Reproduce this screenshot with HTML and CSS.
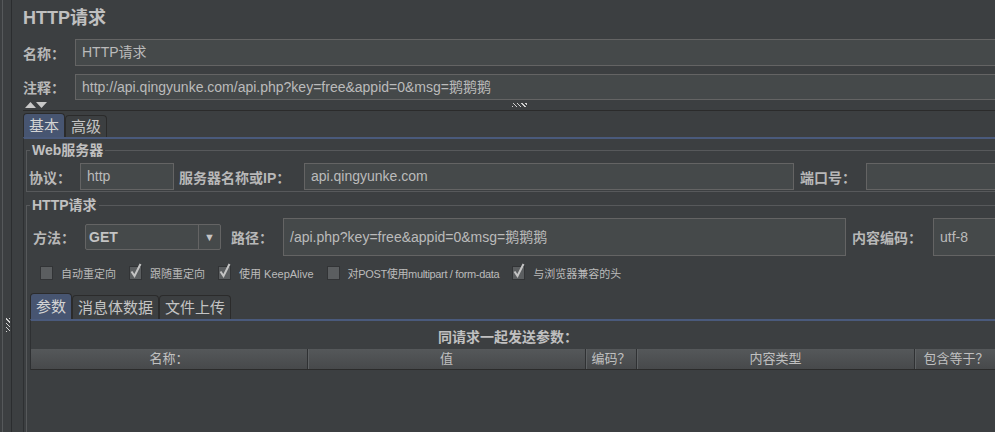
FILE: index.html
```html
<!DOCTYPE html>
<html lang="zh-CN">
  <head>
    <meta charset="UTF-8" />
    <meta name="viewport" content="width=device-width, initial-scale=1.0" />
    <title>HTTP请求</title>
    <link rel="stylesheet" href="styles.css">
  </head>
  <body>
    <div class="app">
      <!-- left splitter -->
      <div class="side"><span class="grip-v"></span></div>

      <main class="main">
        <h1 class="title">HTTP请求</h1>

        <div class="form-row">
          <span class="lbl">名称：</span>
          <div class="field grow">HTTP请求</div>
        </div>
        <div class="form-row notes">
          <span class="lbl">注释：</span>
          <div class="field grow">http://api.qingyunke.com/api.php?key=free&amp;appid=0&amp;msg=鹅鹅鹅</div>
        </div>

        <div class="split-bar">
          <svg class="arrows" width="23" height="6" viewBox="0 0 23 6">
            <polygon points="0,6 5.5,0 11,6" fill="#c8c8c8" />
            <polygon points="11,0 22,0 16.5,6" fill="#c8c8c8" />
          </svg>
          <span class="grip-h"></span>
        </div>

        <div class="tabs">
          <div class="tab active">基本</div>
          <div class="tab">高级</div>
        </div>

        <div class="tab-pane">
          <fieldset class="group">
            <legend>Web服务器</legend>
            <div class="row web-row">
              <span class="lbl proto">协议：</span>
              <div class="field f-proto">http</div>
              <span class="lbl server">服务器名称或IP：</span>
              <div class="field f-server">api.qingyunke.com</div>
              <span class="lbl port">端口号：</span>
              <div class="field grow"></div>
            </div>
          </fieldset>

          <fieldset class="group http">
            <legend>HTTP请求</legend>
            <div class="row req-row">
              <span class="lbl method">方法：</span>
              <div class="combo">
                <span class="combo-value">GET</span>
                <span class="combo-btn">▼</span>
              </div>
              <span class="lbl path">路径：</span>
              <div class="field tall f-path">/api.php?key=free&amp;appid=0&amp;msg=鹅鹅鹅</div>
              <span class="lbl enc">内容编码：</span>
              <div class="field tall grow">utf-8</div>
            </div>

            <div class="checks">
              <label class="check"><span class="box"></span>自动重定向</label>
              <label class="check"><span class="box"><svg width="13" height="15" viewBox="0 0 13 15"><path d="M2.5 8.5 L5.5 13 L11.5 1" fill="none" stroke="#c4c4c4" stroke-width="2" /></svg></span>跟随重定向</label>
              <label class="check"><span class="box"><svg width="13" height="15" viewBox="0 0 13 15"><path d="M2.5 8.5 L5.5 13 L11.5 1" fill="none" stroke="#c4c4c4" stroke-width="2" /></svg></span>使用 KeepAlive</label>
              <label class="check narrow"><span class="box"></span>对POST使用multipart / form-data</label>
              <label class="check"><span class="box"><svg width="13" height="15" viewBox="0 0 13 15"><path d="M2.5 8.5 L5.5 13 L11.5 1" fill="none" stroke="#c4c4c4" stroke-width="2" /></svg></span>与浏览器兼容的头</label>
            </div>

            <div class="tabs inner">
              <div class="tab active">参数</div>
              <div class="tab">消息体数据</div>
              <div class="tab">文件上传</div>
            </div>

            <div class="inner-pane">
              <div class="caption">同请求一起发送参数：</div>
              <div class="thead">
                <div class="th c-name">名称：</div>
                <div class="th c-value">值</div>
                <div class="th c-enc">编码？</div>
                <div class="th c-type">内容类型</div>
                <div class="th c-eq">包含等于？</div>
              </div>
            </div>
          </fieldset>
        </div>
      </main>
    </div>
  </body>
</html>
```

FILE: styles.css
```css
body {
  margin: 0;
  padding: 0;
  width: 995px;
  height: 432px;
  overflow: hidden;
  background: #3c3f41;
  color: #bbbbbb;
  font-family: "Liberation Sans", "Noto Sans CJK SC", sans-serif;
}

.app {
  display: flex;
  height: 432px;
}

/* ===== left splitter ===== */
.side {
  flex: none;
  width: 12px;
  border-right: 1px solid #2b2d2f;
  background: linear-gradient(to right, #3c3f41 2px, #56595b 2px, #56595b 3px, #3c3f41 3px);
  padding: 318px 0 0 6px;
  box-sizing: border-box;
}

.grip-v {
  display: block;
  width: 4px;
  height: 14px;
  background: repeating-linear-gradient(45deg, #d0d0d0 0 1px, transparent 1px 3px);
}

.main {
  flex: none;
  width: 1000px;
  height: 432px;
  overflow: hidden;
  padding-left: 11px;
}

.title {
  margin: 0 0 11px;
  padding-top: 8px;
  font-size: 18px;
  line-height: 20px;
  font-weight: bold;
  color: #c0c0c0;
}

/* ===== fields ===== */
.form-row {
  display: flex;
  align-items: center;
  height: 27px;
}

.form-row.notes {
  margin-top: 8px;
  height: 26px;
}

.lbl {
  flex: none;
  font-size: 14px;
  font-weight: bold;
  white-space: nowrap;
  color: #b8b8b8;
}

.form-row .lbl {
  width: 52px;
}

.field {
  flex: none;
  box-sizing: border-box;
  height: 100%;
  border: 1px solid #646464;
  background: #45494a;
  padding: 0 6px;
  font-size: 14px;
  line-height: 24px;
  white-space: nowrap;
  overflow: hidden;
  color: #bbbbbb;
}

.grow {
  flex: 1;
}

.split-bar {
  display: flex;
  align-items: center;
  height: 10px;
  border-bottom: 1px solid #2b2b2b;
}

.arrows {
  margin-left: 2px;
}

.grip-h {
  margin-left: 464px;
  width: 15px;
  height: 4px;
  background: repeating-linear-gradient(45deg, #d0d0d0 0 1px, transparent 1px 3px);
}

/* ===== tabs ===== */
.tabs {
  display: flex;
  align-items: flex-end;
  height: 24px;
  margin-top: 2px;
}

.tab {
  box-sizing: border-box;
  height: 22px;
  padding: 0 5px;
  border: 1px solid #2b2b2b;
  border-bottom: none;
  border-radius: 4px 4px 0 0;
  font-size: 15px;
  line-height: 21px;
  color: #c4c4c4;
  white-space: nowrap;
}

.tab.active {
  height: 24px;
  line-height: 23px;
  background: #475571;
  color: #d4d4d4;
}

.tab-pane {
  border-top: 2px solid #4a5a7c;
  border-left: 1px solid #2e3032;
  padding-left: 2px;
}

/* ===== groups ===== */
.group {
  margin: 3px 0 0;
  padding: 5px 0 1px 2px;
  border: 1px solid #57595b;
  min-inline-size: 0;
}

.group legend {
  margin-left: 1px;
  padding: 0 2px;
  font-size: 14px;
  line-height: 16px;
  font-weight: bold;
  color: #c0c0c0;
}

.group.http {
  margin-top: 5px;
  padding-bottom: 80px;
}

.row {
  display: flex;
  align-items: center;
}

.web-row {
  height: 27px;
}

.proto { width: 51px; }
.f-proto { width: 94px; }
.server { width: 125px; margin-left: 5px; }
.f-server { width: 490px; }
.port { width: 66px; margin-left: 6px; }

.req-row {
  height: 38px;
  padding-left: 4px;
}

.method { width: 52px; }
.path { width: 52px; margin-left: 10px; }
.f-path { width: 563px; }
.enc { width: 81px; margin-left: 6px; }

.field.tall {
  line-height: 36px;
}

.combo {
  flex: none;
  display: flex;
  box-sizing: border-box;
  width: 136px;
  height: 26px;
  border: 1px solid #646464;
  border-radius: 2px;
  background: #45494a;
}

.combo-value {
  flex: 1;
  padding-left: 3px;
  font-size: 14px;
  font-weight: bold;
  line-height: 24px;
  color: #c4c4c4;
}

.combo-btn {
  width: 21px;
  border-left: 1px solid #646464;
  font-size: 11px;
  line-height: 24px;
  text-align: center;
  color: #c4c4c4;
}

/* ===== checkboxes ===== */
.checks {
  display: flex;
  align-items: center;
  height: 14px;
  margin-top: 10px;
  padding-left: 11px;
}

.check {
  display: flex;
  align-items: center;
  margin-right: 13px;
  font-size: 11px;
  color: #bbbbbb;
  white-space: nowrap;
}

.check.narrow {
  letter-spacing: -0.35px;
}

.box {
  position: relative;
  box-sizing: border-box;
  width: 13px;
  height: 14px;
  margin-right: 8px;
  border: 1px solid #323436;
  background: #5b5e60;
}

.box svg {
  position: absolute;
  left: -1px;
  top: -4px;
}

/* ===== inner tabs and table ===== */
.tabs.inner {
  height: 26px;
  margin-top: 13px;
  margin-left: 1px;
}

.tabs.inner .tab {
  height: 24px;
  line-height: 23px;
}

.tabs.inner .tab.active {
  height: 26px;
  line-height: 25px;
}

.inner-pane {
  margin-left: 1px;
  border-top: 2px solid #4a5a7c;
  border-left: 1px solid #2e3032;
}

.caption {
  width: 954px;
  margin-top: 8px;
  font-size: 14px;
  line-height: 16px;
  font-weight: bold;
  text-align: center;
  color: #c0c0c0;
}

.thead {
  display: flex;
  height: 21px;
  margin-top: 4px;
  border-bottom: 1px solid #2b2b2b;
  background: linear-gradient(#55585a, #47494b);
  box-sizing: border-box;
}

.th {
  flex: none;
  box-sizing: border-box;
  border-right: 1px solid #2f3133;
  box-shadow: 1px 0 0 #5f6264;
  font-size: 13px;
  line-height: 20px;
  text-align: center;
  white-space: nowrap;
  color: #c0c0c0;
}

.c-name { width: 277px; }
.c-value { width: 278px; }
.c-enc { width: 51px; }
.c-type { width: 278px; }
.c-eq { width: 82px; border-right: none; }
```
